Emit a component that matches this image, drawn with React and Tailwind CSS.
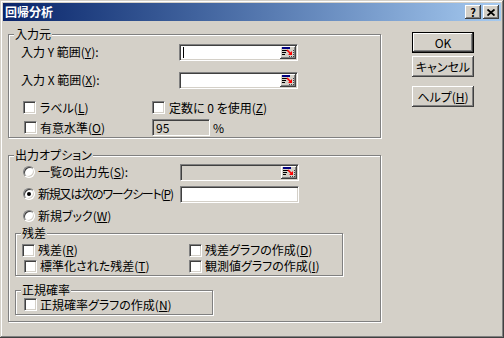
import React from "react";

const sunken =
  "border border-t-[#808080] border-l-[#808080] border-r-white border-b-white shadow-[inset_1px_1px_#404040,inset_-1px_-1px_#d4d0c8]";
const raised =
  "shadow-[inset_-1px_-1px_#404040,inset_1px_1px_#ffffff,inset_-2px_-2px_#808080,inset_2px_2px_#d4d0c8]";

const Key = ({ children }) => <u className="underline">{children}</u>;

const CheckBox = ({ className = "" }) => (
  <span className={`block w-[13px] h-[13px] shrink-0 bg-white ${sunken} ${className}`} />
);

const Radio = ({ checked }) => (
  <span className="flex items-center justify-center w-[12px] h-[12px] shrink-0 rounded-full bg-white border border-t-[#808080] border-l-[#808080] border-r-white border-b-white shadow-[inset_1px_1px_#404040,inset_-1px_-1px_#d4d0c8]">
    {checked && <span className="block w-[4px] h-[4px] rounded-full bg-black" />}
  </span>
);

const RefButton = () => (
  <span className={`flex items-center justify-center w-[16px] h-full bg-[#d4d0c8] ${raised}`}>
    <svg width="12" height="10" viewBox="0 0 12 10">
      <rect x="0" y="0" width="8" height="2" fill="#000080" />
      <rect x="0" y="3" width="5" height="1" fill="#000000" />
      <rect x="0" y="5" width="4" height="1" fill="#000000" />
      <rect x="0" y="7" width="3" height="1" fill="#000000" />
      <rect x="11" y="3" width="1" height="1" fill="#404040" />
      <rect x="11" y="5" width="1" height="1" fill="#404040" />
      <rect x="11" y="7" width="1" height="1" fill="#404040" />
      <rect x="11" y="9" width="1" height="1" fill="#404040" />
      <rect x="7" y="9" width="1" height="1" fill="#404040" />
      <rect x="9" y="9" width="1" height="1" fill="#404040" />
      <path d="M5 3 L9 7" stroke="#ff0000" strokeWidth="1.6" />
      <path d="M6 8 L10 8 L10 4 Z" fill="#ff0000" />
    </svg>
  </span>
);

const Field = ({ value, disabled, refBtn, caret, className = "" }) => (
  <div className={`flex items-stretch h-[17px] p-[1px] shrink-0 ${disabled ? "bg-[#d4d0c8]" : "bg-white"} ${sunken} ${className}`}>
    <span className="flex-1 flex items-center pl-[2px] leading-[13px]">
      {caret && <span className="block w-[1px] h-[11px] bg-black" />}
      {value}
    </span>
    {refBtn && <RefButton />}
  </div>
);

const Btn = ({ children, isDefault, className = "" }) => (
  <div
    className={`flex items-center justify-center w-[62px] h-[21px] bg-[#d4d0c8] ${raised} ${
      isDefault ? "border border-black" : ""
    } ${className}`}
  >
    {children}
  </div>
);

const Group = ({ title, className = "", children }) => (
  <div className={`flex flex-col border border-[#808080] shadow-[inset_1px_1px_#ffffff,1px_1px_#ffffff] ${className}`}>
    <div className="-mt-[8px] ml-[5px] w-fit px-[1px] bg-[#d4d0c8] leading-[14px] h-[14px]">{title}</div>
    {children}
  </div>
);

export default function App() {
  return (
    <div className="w-[504px] h-[338px] flex flex-col p-[3px] bg-[#d4d0c8] text-[12px] text-black font-['Noto_Sans_CJK_JP',sans-serif] [font-feature-settings:'palt'] shadow-[inset_-1px_-1px_#404040,inset_1px_1px_#d4d0c8,inset_-2px_-2px_#808080,inset_2px_2px_#ffffff]">
      {/* title bar */}
      <div className="flex items-center justify-between h-[18px] pl-[2px] pr-[2px] bg-gradient-to-r from-[#0a246a] to-[#a6caf0]">
        <span className="text-white font-bold leading-[14px]">回帰分析</span>
        <div className="flex gap-[2px]">
          <span className={`flex items-center justify-center w-[16px] h-[14px] bg-[#d4d0c8] font-bold text-[11px] leading-[12px] ${raised}`}>
            ?
          </span>
          <span className={`flex items-center justify-center w-[16px] h-[14px] bg-[#d4d0c8] ${raised}`}>
            <svg width="8" height="7" viewBox="0 0 8 7">
              <path d="M0.5 0.5 L7.5 6.5 M7.5 0.5 L0.5 6.5" stroke="#000" strokeWidth="1.8" />
            </svg>
          </span>
        </div>
      </div>

      <div className="flex flex-1">
        {/* left column */}
        <div className="flex flex-col pl-[5px]">
          <Group title="入力元" className="mt-[13px] w-[373px] h-[104px]">
            <div className="flex items-center mt-[2px] pl-[12px]">
              <span className="w-[158px]">
                入力 Y 範囲(<Key>Y</Key>):
              </span>
              <Field caret refBtn className="w-[119px]" />
            </div>
            <div className="flex items-center mt-[10px] pl-[12px]">
              <span className="w-[158px]">
                入力 X 範囲(<Key>X</Key>):
              </span>
              <Field refBtn className="w-[119px]" />
            </div>
            <div className="flex items-center h-[13px] mt-[12px] pl-[14px]">
              <div className="flex items-center gap-[4px] w-[129px]">
                <CheckBox />
                <span>
                  ラベル(<Key>L</Key>)
                </span>
              </div>
              <div className="flex items-center gap-[4px]">
                <CheckBox />
                <span>
                  定数に 0 を使用(<Key>Z</Key>)
                </span>
              </div>
            </div>
            <div className="flex items-center h-[17px] mt-[5px] pl-[15px]">
              <div className="flex items-center gap-[3px] w-[128px]">
                <CheckBox />
                <span>
                  有意水準(<Key>O</Key>)
                </span>
              </div>
              <Field disabled value="95" className="w-[58px]" />
              <span className="ml-[3px]">%</span>
            </div>
          </Group>

          <Group title="出力オプション" className="mt-[17px] w-[373px] h-[167px]">
            <div className="flex items-center mt-[1px] pl-[14px]">
              <div className="flex items-center gap-[3px] w-[157px]">
                <Radio />
                <span>
                  一覧の出力先(<Key>S</Key>):
                </span>
              </div>
              <Field disabled refBtn className="w-[119px]" />
            </div>
            <div className="flex items-center mt-[4px] pl-[14px]">
              <div className="flex items-center gap-[3px] w-[157px] shrink-0">
                <Radio checked />
                <span className="whitespace-nowrap tracking-[-1.2px]">
                  新規又は次のワークシート(<Key>P</Key>)
                </span>
              </div>
              <Field className="w-[119px]" />
            </div>
            <div className="flex items-center h-[17px] mt-[4px] pl-[14px] gap-[3px]">
              <Radio />
              <span>
                新規ブック(<Key>W</Key>)
              </span>
            </div>

            <Group title="残差" className="mt-[9px] ml-[6px] w-[328px] h-[43px]">
              <div className="flex items-center h-[16px] mt-[2px] pl-[6px]">
                <div className="flex items-center gap-[3px] w-[167px]">
                  <CheckBox />
                  <span>
                    残差(<Key>R</Key>)
                  </span>
                </div>
                <div className="flex items-center gap-[3px]">
                  <CheckBox />
                  <span>
                    残差グラフの作成(<Key>D</Key>)
                  </span>
                </div>
              </div>
              <div className="flex items-center h-[16px] pl-[6px]">
                <div className="flex items-center gap-[3px] w-[167px] pl-[2px]">
                  <CheckBox />
                  <span>
                    標準化された残差(<Key>T</Key>)
                  </span>
                </div>
                <div className="flex items-center gap-[3px]">
                  <CheckBox />
                  <span>
                    観測値グラフの作成(<Key>I</Key>)
                  </span>
                </div>
              </div>
            </Group>

            <Group title="正規確率" className="mt-[14px] ml-[6px] w-[198px] h-[25px]">
              <div className="flex items-center gap-[3px] h-[13px] mt-[1px] pl-[8px]">
                <CheckBox />
                <span>
                  正規確率グラフの作成(<Key>N</Key>)
                </span>
              </div>
            </Group>
          </Group>
        </div>

        {/* right column */}
        <div className="flex flex-col ml-[31px] pt-[11px]">
          <Btn isDefault>OK</Btn>
          <Btn className="mt-[3px]">キャンセル</Btn>
          <Btn className="mt-[9px]">
            ヘルプ(<Key>H</Key>)
          </Btn>
        </div>
      </div>
    </div>
  );
}
